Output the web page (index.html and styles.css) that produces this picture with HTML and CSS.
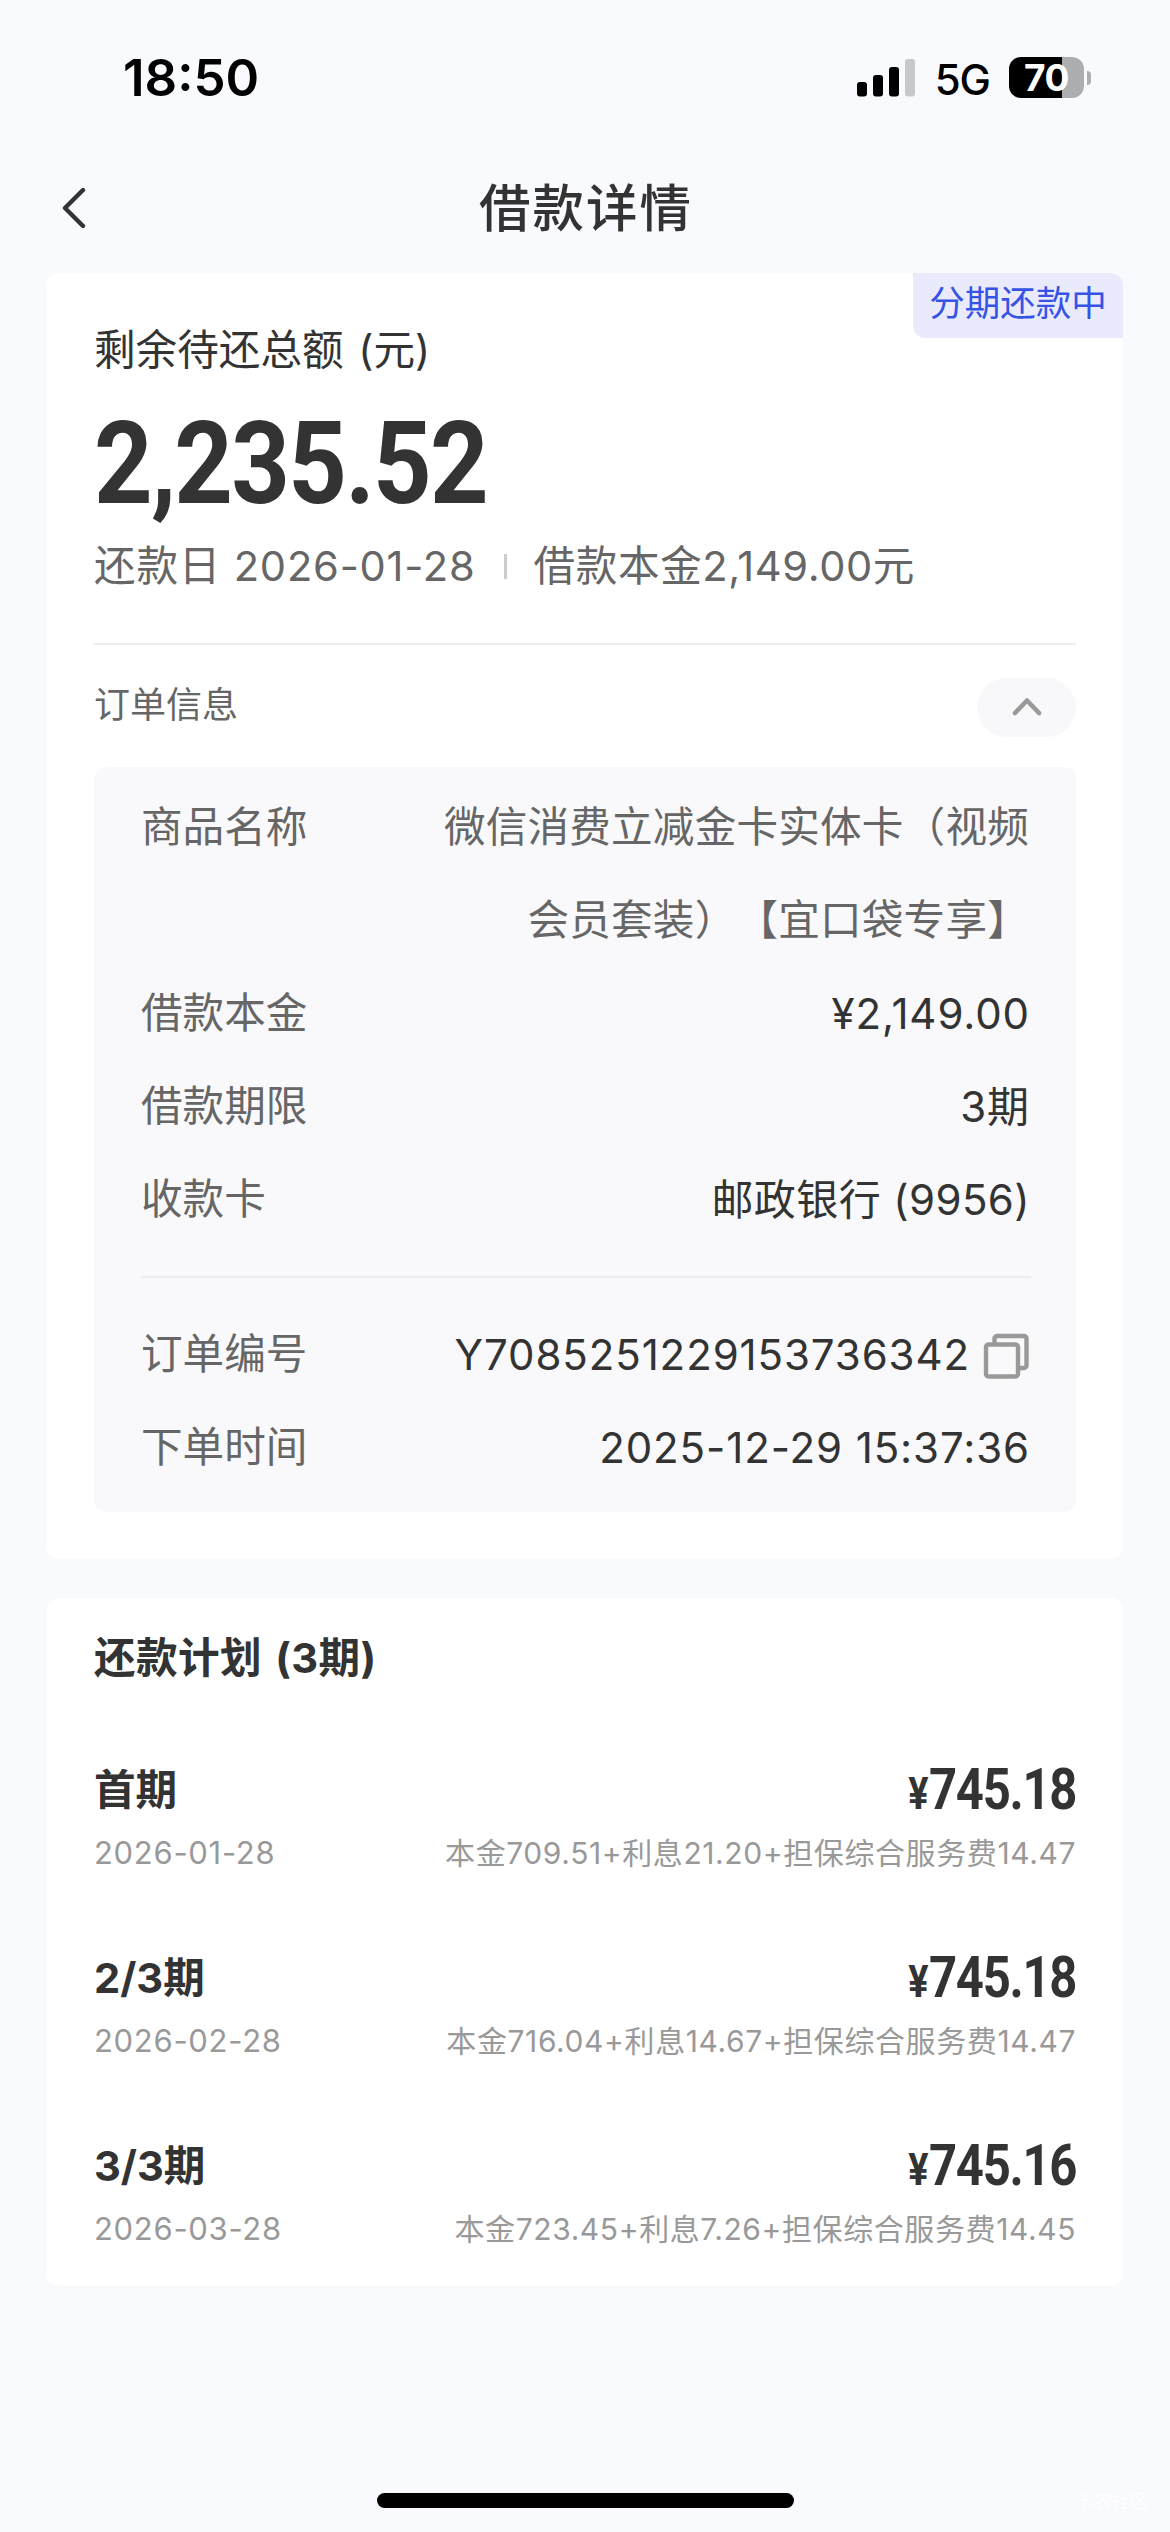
FILE: index.html
```
<!DOCTYPE html>
<html lang="zh-CN">
<head>
    <meta charset="UTF-8">
    <meta name="viewport" content="width=device-width, initial-scale=1.0">
    <title>借款详情</title>
    <link rel="stylesheet" href="styles.css">
</head>
<body>
    <div class="app">
        <div class="status-bar">
            <div class="time">18:50</div>
            <div class="status-icons">
                <svg class="signal" width="58" height="38" viewBox="0 0 58 38">
                    <rect x="0" y="23" width="10" height="14.5" rx="3"/>
                    <rect x="16" y="16" width="10" height="21.5" rx="3"/>
                    <rect x="32" y="8" width="10" height="29.5" rx="3"/>
                    <rect x="48" y="0" width="10" height="37.5" rx="3" fill="#c7c8cb"/>
                </svg>
                <span class="network">5G</span>
                <div class="battery">70</div>
                <div class="battery-tip"></div>
            </div>
        </div>

        <div class="nav-bar">
            <svg class="back" width="26" height="44" viewBox="0 0 26 44">
                <path d="M23 4 5 22 23 40" fill="none" stroke="#333" stroke-width="4.4" stroke-linecap="round" stroke-linejoin="round"/>
            </svg>
            <h1 class="nav-title">借款详情</h1>
        </div>

        <div class="card summary">
            <div class="badge">分期还款中</div>
            <div class="summary-label">剩余待还总额 (元)</div>
            <div class="summary-amount"><span>2,235.52</span></div>
            <div class="summary-meta">
                <span class="due">还款日 2026-01-28</span>
                <span class="sep"></span>
                <span class="principal">借款本金2,149.00元</span>
            </div>
            <div class="order-head">
                <span class="order-title">订单信息</span>
                <div class="toggle">
                    <svg width="32" height="22" viewBox="0 0 32 22">
                        <path d="M4 17 16 4.500 28 17" fill="none" stroke="#999" stroke-width="4.600" stroke-linecap="round" stroke-linejoin="round"/>
                    </svg>
                </div>
            </div>
            <div class="order-box">
                <div class="row">
                    <span class="label">商品名称</span>
                    <span class="product">微信消费立减金卡实体卡（视频会员套装）【宜口袋专享】</span>
                </div>
                <div class="row">
                    <span class="label">借款本金</span>
                    <span class="value">¥2,149.00</span>
                </div>
                <div class="row">
                    <span class="label">借款期限</span>
                    <span class="value">3期</span>
                </div>
                <div class="row">
                    <span class="label">收款卡</span>
                    <span class="value bank">邮政银行 (9956)</span>
                </div>
                <div class="line"></div>
                <div class="row">
                    <span class="label">订单编号</span>
                    <span class="value order-no">Y7085251229153736342</span>
                    <svg class="copy" width="46" height="46" viewBox="0 0 46 46" fill="none" stroke="#999" stroke-width="4.400" stroke-linejoin="round">
                        <rect x="3" y="11.500" width="32" height="32" rx="2.500"/>
                        <path d="M11.500 11.500V5.500a2.500 2.500 0 0 1 2.500-2.500h27a2.500 2.500 0 0 1 2.500 2.500v27a2.500 2.500 0 0 1-2.500 2.500h-6"/>
                    </svg>
                </div>
                <div class="row">
                    <span class="label">下单时间</span>
                    <span class="value">2025-12-29 15:37:36</span>
                </div>
            </div>
        </div>

        <div class="card plan">
            <div class="plan-title">还款计划 (3期)</div>
            <div class="plan-item">
                <div class="plan-main">
                    <span class="term">首期</span>
                    <span class="amount"><small>¥</small>745.18</span>
                </div>
                <div class="plan-sub">
                    <span class="date">2026-01-28</span>
                    <span class="detail">本金709.51+利息21.20+担保综合服务费14.47</span>
                </div>
            </div>
            <div class="plan-item">
                <div class="plan-main">
                    <span class="term">2/3期</span>
                    <span class="amount"><small>¥</small>745.18</span>
                </div>
                <div class="plan-sub">
                    <span class="date">2026-02-28</span>
                    <span class="detail">本金716.04+利息14.67+担保综合服务费14.47</span>
                </div>
            </div>
            <div class="plan-item">
                <div class="plan-main">
                    <span class="term">3/3期</span>
                    <span class="amount"><small>¥</small>745.16</span>
                </div>
                <div class="plan-sub">
                    <span class="date">2026-03-28</span>
                    <span class="detail">本金723.45+利息7.26+担保综合服务费14.45</span>
                </div>
            </div>
        </div>

        <div class="bottom">
            <div class="home-indicator"></div>
            <div class="watermark">卡农社区</div>
        </div>
    </div>
</body>
</html>
```
FILE: styles.css
```
:root {
    --bg: #f9fafe;
    --text: #333;
    --text-mid: #666;
    --text-light: #999;
    --blue: #3653e6;
}

* {
    box-sizing: border-box;
}

body {
    margin: 0;
    background: var(--bg);
    color: var(--text);
    font-family: Inter, "Noto Sans CJK SC", sans-serif;
    font-size: 41.6px;
    text-spacing-trim: space-all;
}

.app {
    width: 1170px;
    height: 2532px;
    display: flex;
    flex-direction: column;
    overflow: hidden;
}

/* status bar */
.status-bar {
    height: 155px;
    padding: 0 79px 0 123px;
    display: flex;
    justify-content: space-between;
    align-items: center;
    color: #000;
}

.time {
    font-size: 51px;
    font-weight: 600;
}

.status-icons {
    display: flex;
    align-items: center;
}

.network {
    margin: 3px 19px 0 20px;
    font-size: 42px;
    font-weight: 450;
    letter-spacing: -1px;
}

.battery {
    width: 75px;
    height: 41px;
    border-radius: 12px;
    background: linear-gradient(to right, #000 53px, #acafb1 53px);
    color: #fff;
    font-size: 37px;
    font-weight: 700;
    line-height: 41px;
    text-align: center;
    letter-spacing: -0.5px;
}

.battery-tip {
    width: 4px;
    height: 14px;
    margin-left: 3px;
    border-radius: 0 4px 4px 0;
    background: #acafb1;
}

/* nav bar */
.nav-bar {
    height: 118px;
    padding: 0 60px 13px;
    display: grid;
    grid-template-columns: 100px 1fr 100px;
    align-items: center;
}

.nav-title {
    margin: 0;
    padding-left: 2px;
    font-size: 51.5px;
    font-weight: 500;
    letter-spacing: 2px;
    line-height: 70px;
    text-align: center;
}

.card {
    margin: 0 47px;
    padding: 0 47px;
    border-radius: 12px;
    background: #fff;
}

/* summary */
.summary {
    position: relative;
    height: 1286px;
}

.badge {
    position: absolute;
    top: 0;
    right: 0;
    width: 210px;
    height: 65px;
    border-radius: 0 12px 0 12px;
    background: #e9ebfc;
    color: var(--blue);
    font-size: 35.5px;
    line-height: 61px;
    text-align: center;
}

.summary-label {
    padding-top: 46px;
    line-height: 62px;
    word-spacing: 3px;
}

.summary-amount {
    height: 116px;
    margin-top: 24px;
    font-family: Roboto, sans-serif;
    font-size: 115px;
    font-weight: 700;
    line-height: 118px;
    letter-spacing: -2px;
}

.summary-amount span {
    display: inline-block;
    transform: scaleX(0.89);
    transform-origin: 0 50%;
}

.summary-meta {
    height: 124px;
    padding-bottom: 38px;
    display: flex;
    align-items: center;
    color: var(--text-mid);
    border-bottom: 2px solid #eee;
}

.due {
    letter-spacing: 0.8px;
}

.principal {
    letter-spacing: 0.6px;
}

.sep {
    width: 3px;
    height: 25px;
    margin: 6px 27px 0 28px;
    background: #ccc;
}

.order-head {
    height: 122px;
    padding-top: 2px;
    display: flex;
    align-items: center;
    justify-content: space-between;
    color: var(--text-mid);
    font-size: 36px;
}

.order-title {
    padding-bottom: 11px;
}

.toggle {
    width: 99px;
    height: 59px;
    border-radius: 30px;
    background: #f8f8fa;
    display: flex;
    align-items: center;
    justify-content: center;
}

.order-box {
    height: 745px;
    padding: 14px 47px 0;
    border-radius: 12px;
    background: #f9f9fb;
}

.row {
    display: flex;
    align-items: flex-start;
    justify-content: space-between;
    line-height: 93px;
}

.label {
    color: var(--text-mid);
}

.value {
    margin-right: -1px;
    font-size: 42px;
    letter-spacing: 0.9px;
}

.bank {
    letter-spacing: 0.4px;
}

.product {
    width: 590px;
    color: var(--text-mid);
    letter-spacing: 0.2px;
    text-align: right;
}

.line {
    height: 2px;
    margin: 30px -2px 30px 0;
    background: #ececee;
}

.order-no {
    margin-left: auto;
}

.copy {
    margin: 25px 0 0 14px;
}

/* repayment plan */
.plan {
    height: 688px;
    margin-top: 39px;
}

.plan-title {
    padding-top: 29px;
    line-height: 62px;
    font-weight: 700;
    letter-spacing: 0.4px;
    word-spacing: 3px;
}

.plan-item {
    height: 188px;
}

.plan-main {
    height: 144px;
    padding-top: 70px;
    display: flex;
    justify-content: space-between;
    line-height: 62px;
}

.term {
    font-weight: 700;
}

.amount {
    font-family: Roboto, sans-serif;
    font-size: 57px;
    font-weight: 700;
    letter-spacing: -1.5px;
    transform: scaleX(0.86);
    transform-origin: 100% 50%;
}

.amount small {
    margin-right: 2px;
    font-size: 44px;
}

.plan-sub {
    display: flex;
    justify-content: space-between;
    color: var(--text-light);
    font-size: 30px;
    line-height: 40px;
    letter-spacing: 0.6px;
}

.date {
    font-size: 31px;
    letter-spacing: 0.7px;
}

/* bottom */
.bottom {
    position: relative;
    margin-top: auto;
    height: 39px;
}

.home-indicator {
    width: 417px;
    height: 15px;
    margin: 0 auto;
    border-radius: 8px;
    background: #000;
}

.watermark {
    position: absolute;
    right: 22px;
    top: -4px;
    color: #fff;
    font-size: 18px;
    line-height: 26px;
}
```
